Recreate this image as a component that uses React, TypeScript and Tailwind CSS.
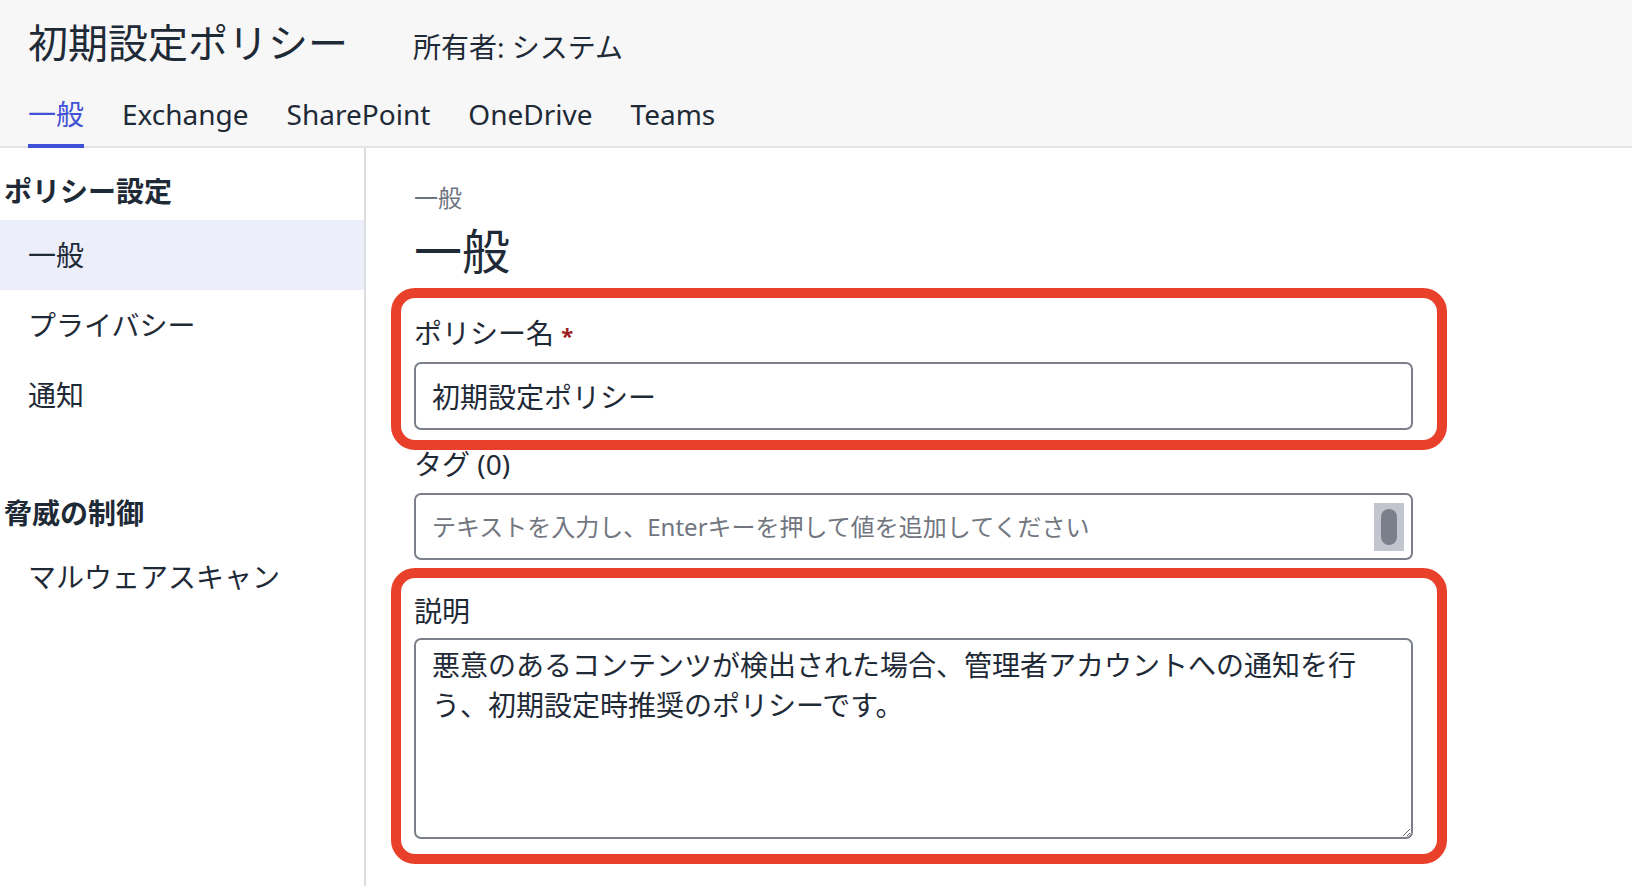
import React from 'react';

const tabs = ['一般', 'Exchange', 'SharePoint', 'OneDrive', 'Teams'];

const sections = [
  { title: 'ポリシー設定', items: ['一般', 'プライバシー', '通知'] },
  { title: '脅威の制御', items: ['マルウェアスキャン'] },
];

const description =
  '悪意のあるコンテンツが検出された場合、管理者アカウントへの通知を行う、初期設定時推奨のポリシーです。';

// red annotation frame drawn over a field group
const Highlight: React.FC<{ className: string }> = ({ className }) => (
  <div
    className={`pointer-events-none absolute rounded-[24px] border-[10px] border-[#e8402a] ${className}`}
  />
);

export default function App() {
  return (
    <div className="flex h-screen w-full flex-col overflow-hidden bg-white font-['Noto_Sans','Noto_Sans_CJK_JP',sans-serif] text-[#1f2a37]">
      <header className="shrink-0 border-b-2 border-[#e4e4e4] bg-[#f7f7f7] pl-[28px]">
        <div className="flex items-baseline gap-[65px] pt-[15px]">
          <h1 className="text-[40px] leading-[56px]">初期設定ポリシー</h1>
          <span className="text-[28px] leading-[40px]">所有者: システム</span>
        </div>
        <nav className="-mb-[2px] mt-[23px] flex gap-[38px]">
          {tabs.map((tab, i) => (
            <button
              key={tab}
              className={`border-b-4 pb-[10px] text-[28px] leading-[40px] ${
                i === 0 ? 'border-[#3f51d6] text-[#4352d5]' : 'border-transparent text-[#1f2a37]'
              }`}
            >
              {tab}
            </button>
          ))}
        </nav>
      </header>

      <div className="flex flex-1">
        <aside className="w-[366px] shrink-0 border-r-2 border-[#dcdde1]">
          {sections.map((section, si) => (
            <div key={section.title} className={si === 0 ? 'mt-[23px]' : 'mt-[63px]'}>
              <h2 className="mb-[9px] pl-[4px] text-[28px] font-bold leading-[40px]">
                {section.title}
              </h2>
              {section.items.map((item, ii) => (
                <div
                  key={item}
                  className={`flex h-[70px] items-center pl-[28px] text-[28px] ${
                    si === 0 && ii === 0 ? 'bg-[#eceefa]' : ''
                  }`}
                >
                  {item}
                </div>
              ))}
            </div>
          ))}
        </aside>

        <main className="flex-1 pl-[48px] pt-[34px]">
          <div className="w-[999px]">
            <div className="text-[24px] leading-[32px] text-[#6b7280]">一般</div>
            <h2 className="mt-[5px] text-[48px] leading-[64px]">一般</h2>

            <div className="relative mt-[30px]">
              <label className="block text-[28px] leading-[40px]">
                ポリシー名 <span className="text-[22px] font-bold text-[#9b1c1c]">*</span>
              </label>
              <input
                defaultValue="初期設定ポリシー"
                className="mt-[7px] h-[68px] w-full rounded-[7px] border-2 border-[#7b7f8a] px-[16px] text-[28px] text-[#1f2a37] outline-none"
              />
              <Highlight className="-bottom-[20px] -left-[23px] -right-[34px] -top-[25px]" />
            </div>

            <div className="mt-[14px]">
              <label className="block text-[28px] leading-[40px]">タグ (0)</label>
              <div className="mt-[9px] flex h-[67px] items-center rounded-[7px] border-2 border-[#7b7f8a] pl-[16px] pr-[7px]">
                <input
                  placeholder="テキストを入力し、Enterキーを押して値を追加してください"
                  className="flex-1 bg-transparent text-[24px] outline-none placeholder:text-[#72767f]"
                />
                <div className="flex h-[48px] w-[30px] items-center justify-center bg-[#c2c5cd]">
                  <div className="h-[36px] w-[16px] rounded-full bg-[#7b7f8b]" />
                </div>
              </div>
            </div>

            <div className="relative mt-[31px]">
              <label className="block text-[28px] leading-[40px]">説明</label>
              <textarea
                defaultValue={description}
                className="mt-[7px] block h-[201px] w-full rounded-[7px] border-2 border-[#7b7f8a] px-[16px] pt-[5px] text-[28px] leading-[40px] text-[#1f2a37] outline-none"
              />
              <Highlight className="-bottom-[25px] -left-[23px] -right-[34px] -top-[23px]" />
            </div>
          </div>
        </main>
      </div>
    </div>
  );
}
